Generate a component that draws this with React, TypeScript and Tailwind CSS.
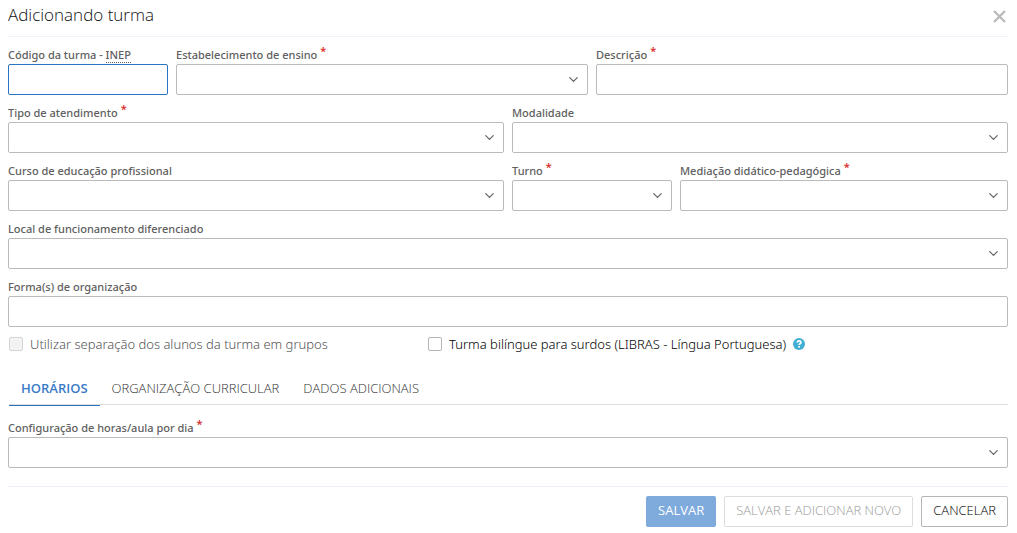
import React, { useState } from 'react';
import { ChevronDown } from 'lucide-react';

interface FieldProps {
  id: string;
  label: React.ReactNode;
  className: string;
  required?: boolean;
  select?: boolean;
  active?: boolean;
}

const Field: React.FC<FieldProps> = ({ id, label, className, required, select, active }) => (
  <div className={className}>
    <label htmlFor={id} className="flex pt-2.5 pb-px font-['Noto_Sans',sans-serif] text-[11px] leading-4 font-medium text-[#606060]">
      <span>{label}</span>
      {required && <span className="-mt-1 ml-[3px] font-semibold text-[#d9302c]">*</span>}
    </label>
    {select ? (
      <div className="relative">
        <select
          id={id}
          required={required}
          className="block h-[31px] w-full appearance-none rounded-xs border border-[#bbbbbb] bg-white px-2 text-[13px] text-[#333] outline-none focus:border-[#2a72c4]"
        >
          <option value=""></option>
        </select>
        <ChevronDown size={15} className="pointer-events-none absolute top-2 right-[7px] text-[#666]" />
      </div>
    ) : (
      <input
        id={id}
        type="text"
        required={required}
        className={`block h-[31px] w-full rounded-xs border bg-white px-2 text-[13px] text-[#333] outline-none focus:border-[#2a72c4] ${
          active ? 'border-[#2a72c4]' : 'border-[#bbbbbb]'
        }`}
      />
    )}
  </div>
);

const TABS = ['HORÁRIOS', 'ORGANIZAÇÃO CURRICULAR', 'DADOS ADICIONAIS'];

const CHECKBOX =
  'size-3.5 appearance-none rounded-xs border border-[#b5b5b5] bg-white checked:bg-[#2a72c4] disabled:border-[#d6d6d6] disabled:bg-[#f3f3f3]';

const App: React.FC = () => {
  const [tab, setTab] = useState(0);

  return (
    <form
      className="bg-white pr-[9px] pl-2 font-['Open_Sans','Noto_Sans',sans-serif] text-[13px] font-light text-[#111]"
      onSubmit={(e) => e.preventDefault()}
    >
      {/* Header */}
      <header className="flex h-[37px] items-center justify-between border-b border-[#f1f1f9] pb-1.5">
        <h1 className="text-[17px] leading-6 font-light text-[#111]">Adicionando turma</h1>
        <button type="button" aria-label="Fechar" className="pt-0.5 pr-0.5 text-[#bbbbbb] hover:text-[#888]">
          <svg width="13" height="13" viewBox="0 0 13 13" fill="none" stroke="currentColor" strokeWidth="2.4" className="block">
            <path d="M1 1l11 11M12 1L1 12" />
          </svg>
        </button>
      </header>

      {/* Fields */}
      <div className="grid grid-cols-12 gap-x-2">
        <Field
          id="codigo"
          className="col-span-2"
          active
          label={
            <>
              Código da turma - <span className="border-b border-dotted border-[#606060]">INEP</span>
            </>
          }
        />
        <Field id="estabelecimento" className="col-span-5" label="Estabelecimento de ensino" required select />
        <Field id="descricao" className="col-span-5" label="Descrição" required />
        <Field id="tipo" className="col-span-6" label="Tipo de atendimento" required select />
        <Field id="modalidade" className="col-span-6" label="Modalidade" select />
        <Field id="curso" className="col-span-6" label="Curso de educação profissional" select />
        <Field id="turno" className="col-span-2" label="Turno" required select />
        <Field id="mediacao" className="col-span-4" label="Mediação didático-pedagógica" required select />
        <Field id="local" className="col-span-12" label="Local de funcionamento diferenciado" select />
        <Field id="formas" className="col-span-12" label="Forma(s) de organização" />
      </div>

      {/* Options */}
      <div className="grid grid-cols-12 gap-x-2 pt-[7px] font-['Noto_Sans',sans-serif]">
        <div className="col-span-5 flex items-center gap-[7px] pl-px">
          <input id="grupos" type="checkbox" disabled className={CHECKBOX} />
          <label htmlFor="grupos" className="leading-5 text-[#555]">
            Utilizar separação dos alunos da turma em grupos
          </label>
        </div>
        <div className="col-span-7 flex items-center gap-[7px]">
          <input id="bilingue" type="checkbox" className={CHECKBOX} />
          <label htmlFor="bilingue" className="leading-5 text-black">
            Turma bilíngue para surdos (LIBRAS - Língua Portuguesa)
          </label>
          <button type="button" aria-label="Ajuda">
            <svg width="12" height="12" viewBox="0 0 12 12" className="block">
              <circle cx="6" cy="6" r="6" fill="#41afd4" />
              <path d="M4.2 4.6C4.3 3.3 5 2.9 6 2.9c1.1 0 1.9.6 1.9 1.6 0 1.3-1.8 1.2-1.8 2.6" fill="none" stroke="#fff" strokeWidth="1.7" />
              <rect x="5.2" y="8" width="1.8" height="1.6" fill="#fff" />
            </svg>
          </button>
        </div>
      </div>

      {/* Tabs */}
      <div role="tablist" className="mt-4 ml-px flex h-[35px] border-b border-[#dddddd]">
        {TABS.map((name, idx) => (
          <button
            key={name}
            type="button"
            role="tab"
            aria-selected={tab === idx}
            onClick={() => setTab(idx)}
            className={`-mb-0.5 border-b px-3 leading-5 ${
              tab === idx ? 'border-[#2a72c4] font-semibold text-[#3a7bc8]' : 'border-transparent text-[#333]'
            }`}
          >
            {name}
          </button>
        ))}
      </div>
      <div role="tabpanel" className="pt-[5px]">
        <Field id="configuracao" className="w-full" label="Configuração de horas/aula por dia" required select />
      </div>

      {/* Footer */}
      <footer className="mt-[18px] flex justify-end gap-2 border-t border-[#f1f1f9] pt-[9px] pb-1.5">
        <button type="submit" className="h-[31px] rounded-xs bg-[#7eaadc] px-3 pb-0.5 font-normal text-white">
          SALVAR
        </button>
        <button type="button" disabled className="h-[31px] rounded-xs border border-[#dddddd] bg-white px-[11px] pb-0.5 text-[#999]">
          SALVAR E ADICIONAR NOVO
        </button>
        <button type="button" className="h-[31px] rounded-xs border border-[#b5b5b5] bg-white px-[11px] pb-0.5 text-black">
          CANCELAR
        </button>
      </footer>
    </form>
  );
};

export default App;
